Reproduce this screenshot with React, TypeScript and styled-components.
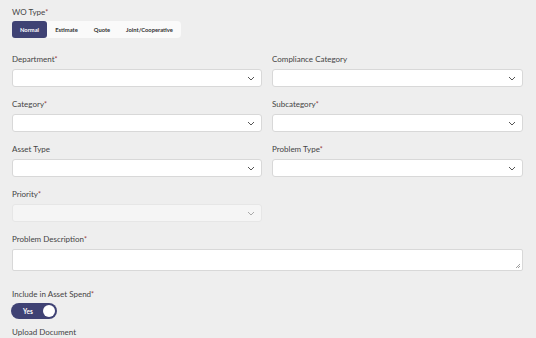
import React from "react";
import styled, { createGlobalStyle } from "styled-components";

const Global = createGlobalStyle`
  html, body { margin: 0; padding: 0; background: #eeeeee; }
  body { font-family: "Lato", "Open Sans", sans-serif; color: #333; }
  * { box-sizing: border-box; }
`;

const Page = styled.div`
  padding: 7px 13px 0 12px;
  width: 536px;
`;

const Field = styled.div<{ $mb?: number }>`
  display: flex;
  flex-direction: column;
  margin-bottom: ${(p) => p.$mb ?? 12}px;
`;

const Label = styled.div`
  font-size: 8px;
  line-height: 10px;
  height: 10px;
  color: #444;
  margin-bottom: 5px;
  white-space: nowrap;
`;

const Req = styled.span`
  color: #9a3a3a;
  font-size: 7px;
  vertical-align: top;
`;

const Tabs = styled.div`
  display: flex;
  align-self: flex-start;
  background: #fafafa;
  border-radius: 4px;
  height: 17px;
  margin-top: -1px;
`;

const Tab = styled.div<{ $active?: boolean; $w: number }>`
  width: ${(p) => p.$w}px;
  display: flex;
  align-items: center;
  justify-content: center;
  font-size: 5.8px;
  font-weight: 700;
  color: ${(p) => (p.$active ? "#fff" : "#333")};
  background: ${(p) => (p.$active ? "#3f4274" : "transparent")};
  border-radius: 3px;
`;

const Grid = styled.div`
  display: grid;
  grid-template-columns: 250px 251px;
  column-gap: 10px;
`;

const SelectBox = styled.div<{ $disabled?: boolean }>`
  height: 18px;
  background: ${(p) => (p.$disabled ? "#f5f5f5" : "#ffffff")};
  border: 1px solid ${(p) => (p.$disabled ? "#e6e6e6" : "#d8d8d8")};
  border-radius: 3px;
  display: flex;
  align-items: center;
  justify-content: flex-end;
  padding-right: 6px;
  color: ${(p) => (p.$disabled ? "#aaa" : "#555")};
`;

const TextArea = styled.div`
  position: relative;
  height: 22px;
  background: #fff;
  border: 1px solid #d8d8d8;
  border-radius: 2px;
  width: 511px;
`;

const Grip = styled.svg`
  position: absolute;
  right: 1px;
  bottom: 1px;
`;

const Toggle = styled.div`
  width: 46px;
  height: 16px;
  border-radius: 8px;
  background: #3f4274;
  display: flex;
  align-items: center;
  justify-content: space-between;
  padding: 0 2px 0 12px;
  margin-left: -1px;
  margin-top: -1px;
`;

const ToggleText = styled.span`
  color: #fff;
  font-size: 6.5px;
  font-weight: 700;
`;

const Knob = styled.div`
  width: 12px;
  height: 12px;
  border-radius: 50%;
  background: #fff;
`;

const Chevron = () => (
  <svg width="8" height="5" viewBox="0 0 8 5">
    <path d="M1 1 L4 4 L7 1" fill="none" stroke="currentColor" strokeWidth="1" />
  </svg>
);

const Select = ({ label, req, disabled }: { label: string; req?: boolean; disabled?: boolean }) => (
  <Field>
    <Label>
      {label}
      {req && <Req>*</Req>}
    </Label>
    <SelectBox $disabled={disabled}>
      <Chevron />
    </SelectBox>
  </Field>
);

export default function App() {
  return (
    <>
      <Global />
      <Page>
        <Field $mb={16}>
          <Label>
            WO Type<Req>*</Req>
          </Label>
          <Tabs>
            <Tab $active $w={35}>Normal</Tab>
            <Tab $w={39}>Estimate</Tab>
            <Tab $w={32}>Quote</Tab>
            <Tab $w={63}>Joint/Cooperative</Tab>
          </Tabs>
        </Field>
        <Grid>
          <Select label="Department" req />
          <Select label="Compliance Category" />
          <Select label="Category" req />
          <Select label="Subcategory" req />
          <Select label="Asset Type" />
          <Select label="Problem Type" req />
          <Select label="Priority" req disabled />
          <div />
        </Grid>
        <Field $mb={18}>
          <Label>
            Problem Description<Req>*</Req>
          </Label>
          <TextArea>
            <Grip width="6" height="6" viewBox="0 0 6 6">
              <path d="M5 1 L1 5 M5 3 L3 5" stroke="#888" strokeWidth="0.8" />
            </Grip>
          </TextArea>
        </Field>
        <Field $mb={8}>
          <Label>
            Include in Asset Spend<Req>*</Req>
          </Label>
          <Toggle>
            <ToggleText>Yes</ToggleText>
            <Knob />
          </Toggle>
        </Field>
        <Field>
          <Label>Upload Document</Label>
        </Field>
      </Page>
    </>
  );
}
